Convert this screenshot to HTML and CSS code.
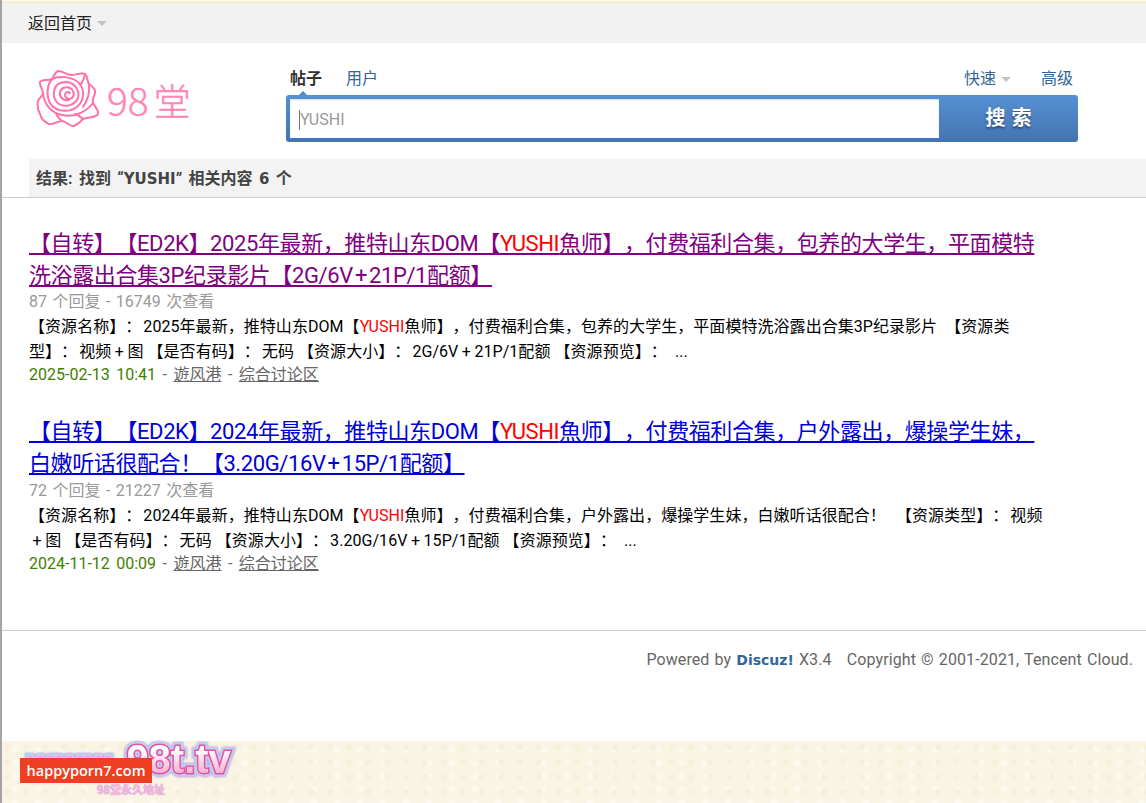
FILE: index.html
```html
<!DOCTYPE html>
<html lang="zh-CN">
<head>
<meta charset="utf-8">
<title>搜索结果</title>
<link rel="stylesheet" href="styles.css">
</head>
<body>
<div class="topline"></div>
<nav class="nav"><a class="nav-link" href="#">返回首页</a><span class="caret"></span></nav>
<header class="head">
  <a class="logo" href="#">
    <svg class="rose" viewBox="0 0 64 60" width="64" height="60" fill="none" stroke="#ff72a8" stroke-width="2" stroke-linecap="round" stroke-linejoin="round">
      <path d="M22 2 C27 2 31 6 35 6 C40 6 46 3 49 5 C52 8 51 12 53 15 C56 17 60 20 59 24 C58 28 56 30 57 34 C59 38 63 41 62 45 C60 49 52 48 47 50 C44 53 41 57 37 57 C33 57 30 52 26 52 C22 52 17 56 13 55 C8 53 5 49 4 45 C2 41 1 36 2 32 C3 29 7 27 7 24 C7 20 3 17 4 13 C6 10 12 12 16 10 C18 7 19 3 22 2 Z"/>
      <path d="M7 24 C8 35 15 44 26 46 C38 49 50 43 57 34"/>
      <path d="M26 52 C23 50 21 47 20 44 M47 50 C44 47 42 46 39 45"/>
      <path d="M49 5 C48 10 47 13 44 16 M53 15 C54 24 52 31 47 38"/>
      <path d="M16 10 C11 16 10 26 14 34 C19 43 33 44 41 38 C48 32 49 22 44 15 C38 8 24 6 16 10 Z"/>
      <path d="M21 16 C16 22 17 31 23 35 C30 39 39 36 42 29 C44 22 39 14 31 13 C27 13 23 14 21 16"/>
      <path d="M33 31 C27 32 23 28 24 23 C25 19 30 17 34 19 C38 21 39 26 36 29 C33 31 29 29 29 26 C29 23 32 22 34 24"/>
    </svg>
    <span class="logo-text"><span class="logo-num">98</span>堂</span>
  </a>
  <div class="search">
    <div class="tabs">
      <div class="tabs-left"><a class="tab tab-on" href="#">帖子</a><a class="tab" href="#">用户</a></div>
      <div class="tabs-right"><a class="tab" href="#">快速</a><span class="caret caret-sm"></span><a class="tab tab-adv" href="#">高级</a></div>
    </div>
    <div class="tab-tip"></div>
    <form class="box">
      <div class="field"><span class="cursor"></span>YUSHI</div>
      <div class="go">搜 索</div>
    </form>
  </div>
</header>
<h2 class="summary">结果: 找到 “<span class="lat">YUSHI</span>” 相关内容 <span class="lat">6</span> 个</h2>
<main class="results">
  <article class="item">
    <h3 class="title"><a class="visited" href="#">【自转】【ED2K】2025年最新，推特山东DOM【<em>YUSHI</em>魚师】，付费福利合集，包养的大学生，平面模特洗浴露出合集3P纪录影片【2G/6V + 21P/1配额】</a></h3>
    <p class="stats">87 个回复 - 16749 次查看</p>
    <p class="snippet">【资源名称】： 2025年最新，推特山东DOM【<em>YUSHI</em>魚师】，付费福利合集，包养的大学生，平面模特洗浴露出合集3P纪录影片&nbsp;&nbsp;&nbsp; 【资源类型】： 视频<span class="plus">+</span>图&nbsp; 【是否有码】： 无码&nbsp; 【资源大小】： 2G/6V<span class="plus">+</span>21P/1配额&nbsp; 【资源预览】：&nbsp;&nbsp;&nbsp; ...</p>
    <p class="meta"><span class="date">2025-02-13 10:41</span> - <a href="#">遊风港</a> - <a href="#">综合讨论区</a></p>
  </article>
  <article class="item">
    <h3 class="title"><a href="#">【自转】【ED2K】2024年最新，推特山东DOM【<em>YUSHI</em>魚师】，付费福利合集，户外露出，爆操学生妹，白嫩听话很配合！【3.20G/16V + 15P/1配额】</a></h3>
    <p class="stats">72 个回复 - 21227 次查看</p>
    <p class="snippet">【资源名称】： 2024年最新，推特山东DOM【<em>YUSHI</em>魚师】，付费福利合集，户外露出，爆操学生妹，白嫩听话很配合！&nbsp;&nbsp;&nbsp;&nbsp; 【资源类型】： 视频<span class="plus">+</span>图&nbsp; 【是否有码】： 无码&nbsp; 【资源大小】： 3.20G/16V<span class="plus">+</span>15P/1配额&nbsp; 【资源预览】：&nbsp;&nbsp;&nbsp; ...</p>
    <p class="meta"><span class="date">2024-11-12 00:09</span> - <a href="#">遊风港</a> - <a href="#">综合讨论区</a></p>
  </article>
</main>
<footer class="foot">Powered by <strong class="lat">Discuz!</strong> X3.4 &nbsp; Copyright © 2001-2021, Tencent Cloud.</footer>
<aside class="banner">
  <div class="b-logo"><span class="b-www">www.</span><span class="b-main">98t.tv</span></div>
  <div class="b-sub">98堂永久地址</div>
  <div class="b-badge">happyporn7.com</div>
</aside>
</body>
</html>
```
FILE: styles.css
```css
* { box-sizing: border-box; }
html, body { margin: 0; padding: 0; }
body {
  height: 803px;
  overflow: hidden;
  position: relative;
  background: #fff;
  border-left: 2px solid #a2a4a8;
  font: 16px/24px Roboto, "Noto Sans CJK SC", sans-serif;
  color: #000;
  text-spacing-trim: space-all;
  word-spacing: 1.5px;
}
a { color: inherit; }
.topline { height: 3px; margin-left: -2px; background: #fdf6e3; border-bottom: 1px solid #f3e7c4; }
.nav { height: 40px; padding: 1px 0 0 26px; background: #f2f2f2; display: flex; align-items: center; gap: 5px; }
.nav-link { text-decoration: none; color: #222; }
.caret { width: 0; height: 0; border: 5px solid transparent; border-top-color: #c4c4c4; border-bottom-width: 0; }
.head { height: 116px; display: flex; }
.logo { width: 284px; padding: 26px 0 0 34px; display: flex; align-items: flex-start; text-decoration: none; }
.rose { flex: none; }
.logo-text { font: 300 37px/46px "Noto Sans CJK SC", sans-serif; color: #ff86b6; -webkit-text-stroke: .4px #ff86b6; margin: 7px 0 0 7px; white-space: nowrap; }
.logo-num { margin-right: 5px; font-size: 39px; }
.search { width: 792px; padding-top: 24px; }
.tabs { display: flex; justify-content: space-between; height: 24px; padding: 0 4px; }
.tabs-left, .tabs-right { display: flex; align-items: center; }
.tab { color: #336699; text-decoration: none; margin-right: 24px; }
.tab-on { color: #333; font-weight: bold; }
.tabs-right .tab { margin-right: 0; }
.caret-sm { margin-left: 5px; }
.tab-adv { margin-left: 30px; }
.tabs-right { padding-right: 1px; }
.tab-tip { width: 0; height: 4px; margin: 0 0 0 13px; border: 4px solid transparent; border-bottom-color: #5389c9; border-top-width: 0; }
.box { height: 47px; border-radius: 3px; background: linear-gradient(#5690d4, #4474b0); display: flex; padding: 4px 0 4px 4px; }
.field { width: 649px; height: 39px; background: #fff; color: #999; padding: 2px 0 0 9px; box-shadow: inset 0 1px 2px #d5dce6; display: flex; align-items: center; }
.cursor { width: 1px; height: 20px; background: #777; }
.go { flex: 1; text-align: center; color: #fff; font-weight: bold; font-size: 20px; line-height: 39px; word-spacing: 1px; text-shadow: 0 2px 2px #2c4a75; }
.summary { margin: 0 0 0 27px; height: 39px; padding-left: 7px; font-size: 16px; line-height: 40px; font-weight: bold; color: #444; background: #f3f3f3; border-bottom: 1px solid #ccc; position: relative; word-spacing: 2.4px; }
.summary::after { content: ""; position: absolute; left: -29px; width: 29px; bottom: -1px; height: 1px; background: #ccc; }
.lat { font-family: "DejaVu Sans", sans-serif; font-size: 15px; }
.results { padding: 30px 0 0 27px; width: 1048px; }
.item { margin-bottom: 29px; }
.title { margin: 0; font-size: 22px; line-height: 32px; font-weight: normal; letter-spacing: -.4px; word-spacing: -3px; }
.title a { color: #0000d8; }
.title a.visited { color: #800080; }
em { font-style: normal; color: #f00; }
.stats { margin: -2px 0 0; color: #999; }
.item + .item .stats { margin-top: -1px; }
.snippet { margin: 0; line-height: 25px; word-spacing: -2px; letter-spacing: .05px; }
.plus { margin: 0 3.5px; }
.meta { margin: -1px 0 0; color: #666; word-spacing: 2.5px; }
.date { color: #3f8000; }
.foot { position: absolute; left: -2px; right: 0; top: 630px; height: 60px; padding: 17px 13px 0 0; border-top: 1px solid #ccc; text-align: right; color: #666; word-spacing: 1px; letter-spacing: .1px; }
.foot strong { color: #336699; font-size: 14px; letter-spacing: 0; }
.banner {
  position: absolute; left: 0; right: 0; bottom: 0; height: 62px;
  background-color: #f9f4e4;
  background-image:
    radial-gradient(circle at 5px 6px, #f6efd9 2px, transparent 4px),
    radial-gradient(circle at 13px 9px, #fcf9ee 2px, transparent 4px);
  background-size: 19px 15px, 23px 13px;
}
.b-logo { position: absolute; left: 26px; top: -4px; display: flex; align-items: baseline; font: bold 40px/44px "Liberation Sans", sans-serif; white-space: nowrap; word-spacing: 0; filter: drop-shadow(0 0 1px #a874dc); }
.b-www { font-size: 32px; letter-spacing: 4px; color: #f6a8d2; -webkit-text-stroke: 5px #bcd0f5; paint-order: stroke fill; }
.b-main { position: relative; color: #ec5d9f; -webkit-text-stroke: 7px #bcd0f5; paint-order: stroke fill; }
.b-main::before { content: "98t.tv"; position: absolute; left: 0; top: 0; color: #f06aa8; -webkit-text-stroke: 3px #e4559b; }
.b-main::after { content: "98t.tv"; position: absolute; left: 0; top: 0; background: linear-gradient(#fff 30%, #fbcfe4 60%, #f79ac6); -webkit-background-clip: text; background-clip: text; color: transparent; -webkit-text-stroke: 0; }
.b-sub { position: absolute; left: 95px; top: 41px; font: bold 11px/14px "Noto Sans CJK SC", sans-serif; color: #f8b8dc; text-shadow: 0 0 1px #a874dc; word-spacing: 0; }
.b-badge { position: absolute; left: 18px; top: 17px; width: 132px; height: 25px; background: #ee3f22; color: #fff; font: 600 14.5px/25px "Open Sans", sans-serif; text-align: center; word-spacing: 0; }
```
